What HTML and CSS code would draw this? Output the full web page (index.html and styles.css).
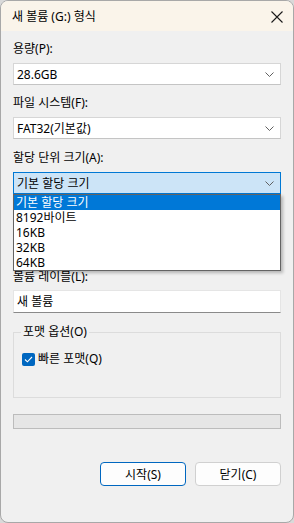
FILE: index.html
```html
<!DOCTYPE html>
<html lang="ko">
<head>
    <meta charset="UTF-8">
    <meta name="viewport" content="width=device-width, initial-scale=1.0">
    <title>새 볼륨 (G:) 형식</title>
    <link rel="stylesheet" href="styles.css">
</head>
<body>
    <div class="window">
        <div class="titlebar">
            <span class="title">새 볼륨 (G:) 형식</span>
            <svg class="close" width="12" height="12" viewBox="0 0 12 12">
                <path d="M0.5 0.5 L11.5 11.5 M11.5 0.5 L0.5 11.5" stroke="#1a1a1a" stroke-width="1.1" fill="none"/>
            </svg>
        </div>

        <div class="content">
            <div class="field">
                <div class="label">용량(P):</div>
                <div class="combo">
                    <span>28.6GB</span>
                    <svg class="chevron" width="9" height="5" viewBox="0 0 9 5"><path d="M0.5 0.5 L4.5 4.5 L8.5 0.5" stroke="#606060" fill="none"/></svg>
                </div>
            </div>

            <div class="field">
                <div class="label">파일 시스템(F):</div>
                <div class="combo">
                    <span>FAT32(기본값)</span>
                    <svg class="chevron" width="9" height="5" viewBox="0 0 9 5"><path d="M0.5 0.5 L4.5 4.5 L8.5 0.5" stroke="#606060" fill="none"/></svg>
                </div>
            </div>

            <div class="field field-open">
                <div class="label">할당 단위 크기(A):</div>
                <div class="combo-wrap">
                    <div class="combo combo-active">
                        <span>기본 할당 크기</span>
                        <svg class="chevron" width="9" height="5" viewBox="0 0 9 5"><path d="M0.5 0.5 L4.5 4.5 L8.5 0.5" stroke="#606060" fill="none"/></svg>
                    </div>
                    <!-- open dropdown list, drawn over the controls below -->
                    <ul class="list">
                        <li class="selected">기본 할당 크기</li>
                        <li>8192바이트</li>
                        <li>16KB</li>
                        <li>32KB</li>
                        <li>64KB</li>
                    </ul>
                </div>
            </div>

            <div class="field field-label">
                <div class="label">볼륨 레이블(L):</div>
                <div class="textbox">새 볼륨</div>
            </div>

            <fieldset class="group">
                <legend>포맷 옵션(O)</legend>
                <div class="check">
                    <span class="box">
                        <svg width="9" height="7" viewBox="0 0 9 7"><path d="M1 3.5 L3.4 5.8 L8 1" stroke="#fff" stroke-width="1.1" fill="none"/></svg>
                    </span>
                    <span>빠른 포맷(Q)</span>
                </div>
            </fieldset>

            <div class="progress"></div>

            <div class="buttons">
                <button class="btn btn-default">시작(S)</button>
                <button class="btn">닫기(C)</button>
            </div>
        </div>
    </div>
</body>
</html>
```

FILE: styles.css
```css
body {
    margin: 0;
    background-color: #d9d9d9;
    font-family: "Noto Sans", "Noto Sans CJK KR", sans-serif;
    font-size: 12px;
    color: #000;
}

.window {
    width: 294px;
    height: 523px;
    box-sizing: border-box;
    border: 1px solid #a8a8a8;
    border-radius: 8px;
    background-color: #f0f0f0;
    overflow: hidden;
}

.titlebar {
    height: 30px;
    background-color: #faf4ea;
    display: flex;
    align-items: center;
    justify-content: space-between;
    padding: 0 10px 0 11px;
}

.title {
    line-height: 16px;
    margin-top: 1px;
}

.close {
    display: block;
    margin-top: 1px;
}

.content {
    padding: 10px 12px 0 12px;
}

.field + .field {
    margin-top: 10px;
}

.field.field-open {
    margin-top: 11px;
}

.label {
    line-height: 16px;
    margin-bottom: 6px;
}

.combo {
    height: 22px;
    box-sizing: border-box;
    background-color: #fff;
    border: 1px solid #d6d6d6;
    border-bottom-color: #c4c4c4;
    display: flex;
    align-items: center;
    justify-content: space-between;
    padding: 0 6px 0 3px;
}

.combo-wrap {
    position: relative;
}

.combo-active {
    background-color: #cce4f7;
    border-color: #0078d4;
}

.chevron {
    display: block;
}

.list {
    position: absolute;
    top: 100%;
    left: 0;
    right: 0;
    margin: 0;
    padding: 0;
    list-style: none;
    background-color: #fff;
    border: 1px solid #646464;
    box-shadow: 2px 2px 3px rgba(0, 0, 0, 0.25);
    z-index: 2;
}

.list li {
    height: 15px;
    line-height: 15px;
    padding-left: 2px;
}

.list li.selected {
    background-color: #0078d7;
    color: #fff;
}

/* the restore-defaults row sits under the open list, so only its space shows */
.field.field-label {
    margin-top: 75px;
}

.label + .textbox {
    margin-top: -1px;
}

.textbox {
    height: 23px;
    box-sizing: border-box;
    background-color: #fff;
    border: 1px solid #e5e5e5;
    border-bottom-color: #8a8a8a;
    line-height: 21px;
    padding-left: 3px;
}

.group {
    margin: 12px 0 0 0;
    padding: 12px 8px 30px 8px;
    border: 1px solid #dcdcdc;
    min-width: 0;
}

.group legend {
    padding: 0 2px;
    margin-left: -1px;
    line-height: 14px;
}

.check {
    display: flex;
    align-items: center;
    gap: 3px;
    line-height: 16px;
}

.box {
    width: 13px;
    height: 13px;
    border-radius: 2px;
    background-color: #0067c0;
    display: flex;
    align-items: center;
    justify-content: center;
}

.box svg {
    display: block;
}

.progress {
    margin-top: 16px;
    height: 15px;
    box-sizing: border-box;
    background-color: #e6e6e6;
    border: 1px solid #bcbcbc;
}

.buttons {
    display: flex;
    justify-content: flex-end;
    gap: 9px;
    margin-top: 33px;
}

.btn {
    width: 86px;
    height: 24px;
    box-sizing: border-box;
    background-color: #fdfdfd;
    border: 1px solid #d0d0d0;
    border-radius: 4px;
    font-family: inherit;
    font-size: 12px;
    color: #000;
    padding: 0;
}

.btn-default {
    border-color: #0067c0;
}
```
